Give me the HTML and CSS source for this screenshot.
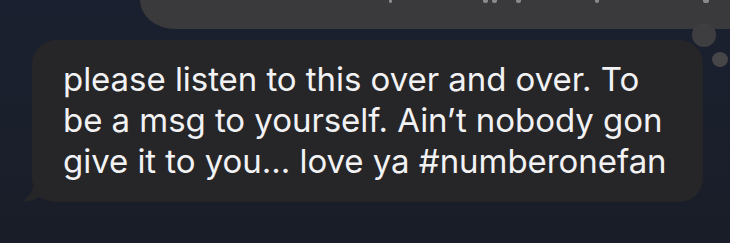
FILE: index.html
```html
<!DOCTYPE html>
<html>
<head>
<meta charset="utf-8">
<link rel="stylesheet" href="styles.css">
</head>
<body>
<div class="thread">
  <div class="prev-bubble">
    <span class="mark m1"></span>
    <span class="mark m2"></span>
    <span class="mark m3"></span>
    <span class="mark m4"></span>
    <span class="mark m5"></span>
    <span class="mark m6"></span>
  </div>
  <span class="dot dot-big"></span>
  <span class="dot dot-small"></span>
  <div class="bubble">
    <p class="msg">please listen to this over and over. To<br>be a msg to yourself. Ain’t nobody gon<br>give it to you… love ya #numberonefan</p>
    <svg class="tail" width="30" height="24" viewBox="0 0 30 24">
      <path d="M12 0 C12 10 8 18 0 22 C6 23 13 21 17 18 C20 20 24 21 30 21 L30 0 Z" fill="#262628"/>
    </svg>
  </div>
</div>
</body>
</html>
```
FILE: styles.css
```css
html, body {
  margin: 0;
  padding: 0;
}
body {
  width: 730px;
  height: 243px;
  overflow: hidden;
  background: linear-gradient(180deg, #1b2030 0%, #1a1f2b 60%, #191d28 100%);
  font-family: "Inter", "Noto Sans", sans-serif;
}
.thread {
  position: relative;
  height: 243px;
}
.prev-bubble {
  position: relative;
  height: 29px;
  margin-left: 140px;
  background: #3a3a3c;
  border-bottom-left-radius: 46px 38px;
}
.mark {
  position: absolute;
  top: 0;
  height: 3px;
  background: #8a8a8c;
  border-radius: 0 0 2px 2px;
}
.m1 { left: 249px; width: 3px; }
.m2 { left: 343px; width: 5px; }
.m3 { left: 352px; width: 5px; }
.m4 { left: 376px; width: 5px; }
.m5 { left: 455px; width: 4px; }
.m6 { left: 563px; width: 6px; }
.dot {
  position: absolute;
  border-radius: 50%;
}
.dot-big {
  left: 692px;
  top: 23px;
  width: 24px;
  height: 24px;
  background: #3e3e40;
}
.dot-small {
  left: 712px;
  top: 52px;
  width: 16px;
  height: 15px;
  background: #464649;
}
.bubble {
  position: relative;
  margin: 11px 0 0 32px;
  width: 671px;
  height: 162px;
  box-sizing: border-box;
  padding: 19px 20px 0 31px;
  background: #262628;
  border-radius: 24px;
}
.msg {
  margin: 0;
  color: #f2f2f4;
  font-size: 33px;
  line-height: 41px;
  letter-spacing: -0.05px;
  white-space: nowrap;
}
.tail {
  position: absolute;
  left: -10px;
  bottom: -1px;
}
```
